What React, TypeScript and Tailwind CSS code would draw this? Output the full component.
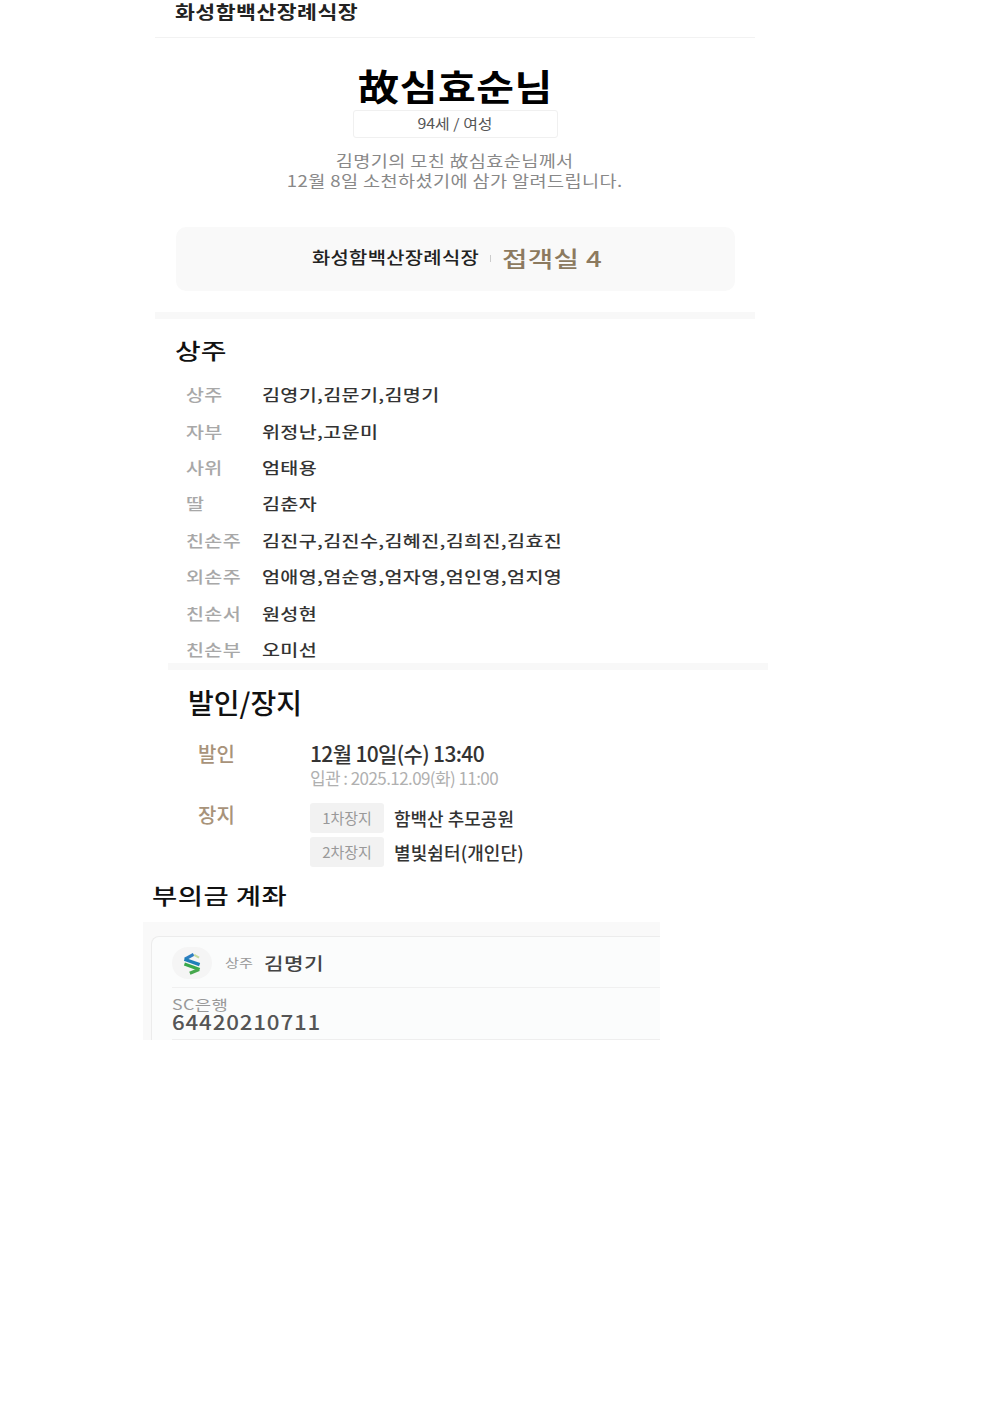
const font = { fontFamily: '"Noto Sans CJK KR", "Noto Sans", sans-serif' };

const rows: [string, string][] = [
  ["상주", "김영기,김문기,김명기"],
  ["자부", "위정난,고운미"],
  ["사위", "엄태용"],
  ["딸", "김춘자"],
  ["친손주", "김진구,김진수,김혜진,김희진,김효진"],
  ["외손주", "엄애영,엄순영,엄자영,엄인영,엄지영"],
  ["친손서", "원성현"],
  ["친손부", "오미선"],
];

function ScLogo() {
  return (
    <svg width="26" height="26" viewBox="0 0 24 24" fill="none" strokeWidth="3">
      <path d="M5.5 8.5 L13.5 4" stroke="#2f7fc1" />
      <path d="M14 4.5 L18.5 7" stroke="#c4dca0" strokeWidth="2" />
      <path d="M5 8.5 L19 13.5" stroke="#1f7fb8" />
      <path d="M5 13 L19 18" stroke="#38a84a" />
      <path d="M18.5 18 L10 21.5" stroke="#46a84d" />
    </svg>
  );
}

export default function App() {
  return (
    <div style={font} className="h-[1403px] w-[992px] overflow-hidden bg-white">
      <section className="ml-[155px] w-[600px]">
        <header className="flex h-[38px] items-start border-b border-[#f2f2f2] pl-[20px]">
          <span className="origin-left -translate-y-[1px] scale-x-[1.2] whitespace-nowrap text-[18px] font-bold leading-[24px] tracking-[0.4px] text-[#222]">화성함백산장례식장</span>
        </header>
        <div className="flex flex-col items-center pt-[23px]">
          <h1 className="scale-x-[1.14] whitespace-nowrap text-[36px] font-bold leading-[48px] tracking-[0.5px] text-black">故심효순님</h1>
          <div className="mt-[1px] flex h-[28px] w-[205px] items-center justify-center rounded-[3px] border border-[#f0f0f0] pb-[2px] text-[14px] leading-none text-[#555]">
            <span className="scale-x-[1.14]">94세 / 여성</span>
          </div>
          <p className="mt-[12px] scale-x-[1.16] text-center text-[16px] leading-[20px] tracking-[0.35px] text-[#888]">
            김명기의 모친 故심효순님께서
            <br />
            12월 8일 소천하셨기에 삼가 알려드립니다.
          </p>
        </div>
        <div className="ml-[21px] mr-[20px] mt-[37px] flex h-[64px] items-center justify-center rounded-[10px] bg-[#f9f9f9] pb-[5px]">
          <span className="w-[167px] origin-left scale-x-[1.168] whitespace-nowrap text-[17px] font-medium tracking-[0.25px] text-[#222]">화성함백산장례식장</span>
          <span className="mx-[11px] mt-[3px] h-[7px] w-px bg-[#ccc]" />
          <span className="w-[98px] origin-left scale-x-[1.256] whitespace-nowrap text-[22px] font-medium leading-none tracking-[0.3px] text-[#8c7a5f]">접객실 4</span>
        </div>
        <div className="mt-[21px] h-[7px] bg-[#f8f8f8]" />
        <div className="pl-[20px] pt-[14px]">
          <h2 className="origin-left scale-x-[1.27] text-[22px] font-medium leading-[32px] text-[#111]">상주</h2>
          <ul className="mt-[11px] flex flex-col pl-[11px]">
            {rows.map(([label, names]) => (
              <li key={label} className="flex h-[36.4px] items-center text-[16px] leading-none">
                <span className="w-[76px] shrink-0 origin-left scale-x-[1.22] font-medium tracking-[0.3px] text-[#a8a8a8]">{label}</span>
                <span className="origin-left scale-x-[1.222] whitespace-nowrap font-medium tracking-[0.3px] text-[#333]">{names}</span>
              </li>
            ))}
          </ul>
        </div>
      </section>

      <section className="ml-[168px] w-[600px]">
        <div className="-mt-[4px] h-[7px] bg-[#f8f8f8]" />
        <div className="pl-[20px] pt-[14px]">
          <h2 className="text-[28px] font-medium leading-[36px] text-[#111]">발인/장지</h2>
          <div className="mt-[20px] flex pl-[10px]">
            <span className="w-[112px] shrink-0 pt-[1px] text-[20px] font-medium leading-[26px] text-[#a8937a]">발인</span>
            <div>
              <div className="whitespace-nowrap text-[21px] font-medium leading-[26px] tracking-[-0.65px] text-[#333]">12월 10일(수) 13:40</div>
              <div className="mt-[1px] whitespace-nowrap text-[17px] leading-[22px] tracking-[-0.58px] text-[#b0b0b0]">입관 : 2025.12.09(화) 11:00</div>
            </div>
          </div>
          <div className="mt-[14px] flex pl-[10px]">
            <span className="w-[112px] shrink-0 pt-[1px] text-[20px] font-medium leading-[22px] text-[#a8937a]">장지</span>
            <div className="flex flex-col gap-[4px]">
              <div className="flex items-center gap-[10px]">
                <span className="flex h-[30px] w-[74px] items-center justify-center rounded-[3px] bg-[#f2f2f2] pb-[1px] text-[15px] leading-none text-[#999]">1차장지</span>
                <span className="text-[18px] font-medium leading-none text-[#333]">함백산 추모공원</span>
              </div>
              <div className="flex items-center gap-[10px]">
                <span className="flex h-[30px] w-[74px] items-center justify-center rounded-[3px] bg-[#f2f2f2] pb-[1px] text-[15px] leading-none text-[#999]">2차장지</span>
                <span className="text-[18px] font-medium leading-none tracking-[0.1px] text-[#333]">별빛쉼터(개인단)</span>
              </div>
            </div>
          </div>
        </div>
      </section>

      <section className="ml-[143px] w-[517px]">
        <h2 className="mt-[12px] origin-left translate-x-[9px] scale-x-[1.245] text-[22px] font-medium leading-[30px] tracking-[0.4px] text-[#111]">부의금 계좌</h2>
        <div className="mt-[13px] h-[118px] overflow-hidden bg-[#f9f9f9] pl-[8px] pt-[14px]">
          <div className="h-[130px] rounded-l-[8px] border-y border-l border-[#ececec] bg-[#fbfcfc] pl-[20px]">
            <div className="flex h-[51px] items-center border-b border-[#f0f0f0] pt-[2px]">
              <span className="flex h-[32px] w-[40px] items-center justify-center rounded-full bg-[#f5f5f5]">
                <ScLogo />
              </span>
              <span className="ml-[13px] w-[28px] origin-left scale-x-[1.27] whitespace-nowrap text-[12px] text-[#999]">상주</span>
              <span className="ml-[11px] origin-left scale-x-[1.25] whitespace-nowrap text-[17px] font-medium tracking-[0.4px] text-[#444]">김명기</span>
            </div>
            <div className="h-[52px] border-b border-[#eeeeee] pt-[7px]">
              <div className="origin-left scale-x-[1.27] text-[14px] leading-[18px] tracking-[0.3px] text-[#999]">SC은행</div>
              <div className="origin-left scale-x-[1.115] text-[20px] font-medium leading-[18px] tracking-[0.75px] text-[#555]">64420210711</div>
            </div>
          </div>
        </div>
      </section>
    </div>
  );
}
